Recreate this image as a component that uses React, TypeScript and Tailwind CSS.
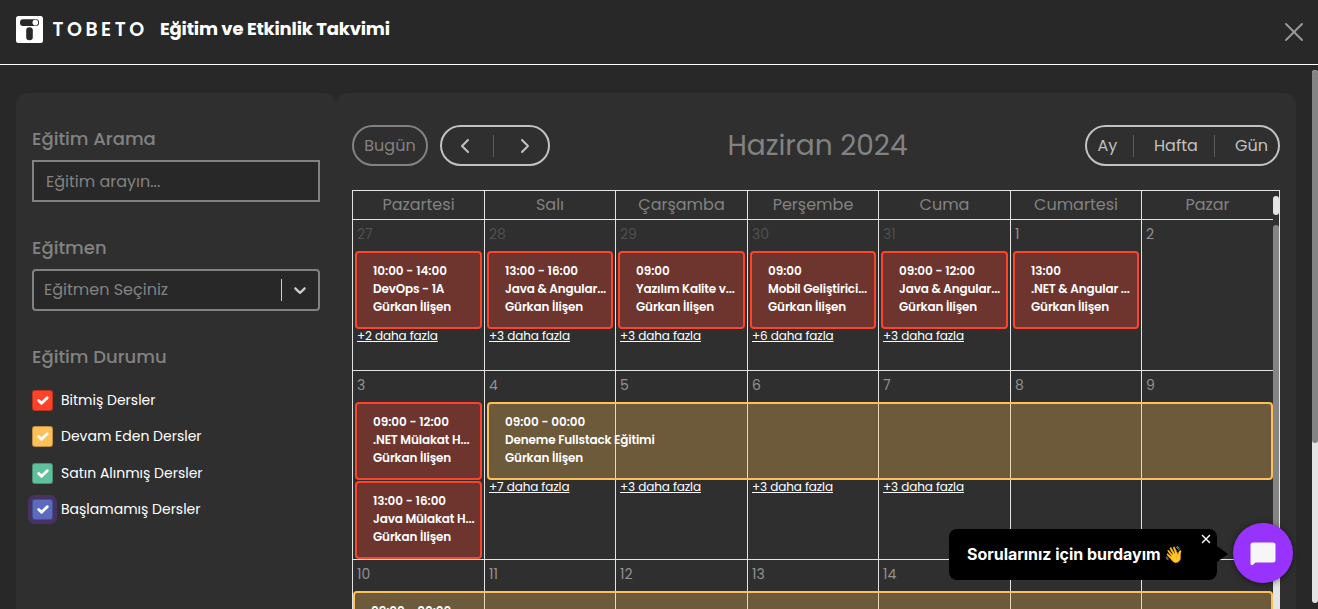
import React from "react";
import { ChevronLeft, ChevronRight, X } from "lucide-react";

type Item = { time: string; title: string; teacher?: string };
type Day = { n: string; muted?: boolean; items?: Item[]; more?: string };

const COLS = "grid-cols-[132px_131px_132px_131px_132px_131px_132px]";
const T = "Gürkan İlişen";

const week1: Day[] = [
  { n: "27", muted: true, items: [{ time: "10:00 - 14:00", title: "DevOps - 1A" }], more: "+2 daha fazla" },
  { n: "28", muted: true, items: [{ time: "13:00 - 16:00", title: "Java & Angular..." }], more: "+3 daha fazla" },
  { n: "29", muted: true, items: [{ time: "09:00", title: "Yazılım Kalite v..." }], more: "+3 daha fazla" },
  { n: "30", muted: true, items: [{ time: "09:00", title: "Mobil Geliştirici..." }], more: "+6 daha fazla" },
  { n: "31", muted: true, items: [{ time: "09:00 - 12:00", title: "Java & Angular..." }], more: "+3 daha fazla" },
  { n: "1", items: [{ time: "13:00", title: ".NET & Angular ..." }] },
  { n: "2" },
];

const week2: Day[] = [
  {
    n: "3",
    items: [
      { time: "09:00 - 12:00", title: ".NET Mülakat H..." },
      { time: "13:00 - 16:00", title: "Java Mülakat H..." },
    ],
  },
  { n: "4", more: "+7 daha fazla" },
  { n: "5", more: "+3 daha fazla" },
  { n: "6", more: "+3 daha fazla" },
  { n: "7", more: "+3 daha fazla" },
  { n: "8" },
  { n: "9" },
];

const week3: Day[] = ["10", "11", "12", "13", "14", "15", "16"].map((n) => ({ n }));

function EventText({ time, title }: Item) {
  return (
    <>
      <div className="tracking-[-0.04px]">{time}</div>
      <div className="tracking-[-0.15px]">{title}</div>
      <div className="tracking-[-0.13px]">{T}</div>
    </>
  );
}

const EVENT = "h-[78px] rounded-[4px] border-2 pl-4 pt-[9px] text-[12px] leading-[18px] font-semibold whitespace-nowrap text-white";

function DayCell({ day, spanned }: { day: Day; spanned?: boolean }) {
  return (
    <div className="border-l border-[#e4e4e4]">
      <div className={`h-[31px] pl-1 pt-[4px] text-[14px] leading-[21px] ${day.muted ? "text-[#4f4f4f]" : "text-[#929292]"}`}>{day.n}</div>
      <div className="flex flex-col gap-px px-0.5">
        {day.items?.map((it) => (
          <div key={it.time} className={`${EVENT} border-[#ff432b] bg-[#6e352f]`}>
            <EventText {...it} />
          </div>
        ))}
      </div>
      {day.more && (
        <div className={`pl-1 text-[12px] leading-[13px] tracking-[-0.1px] text-white underline ${spanned ? "pt-[78px]" : ""}`}>{day.more}</div>
      )}
    </div>
  );
}

function Check({ box, label, gap, focused }: { box: string; label: string; gap: string; focused?: boolean }) {
  return (
    <div className={`flex items-center gap-2 ${gap}`}>
      <span className={`flex size-[21px] items-center justify-center rounded-[3px] border border-black/25 ${box} ${focused ? "shadow-[0_0_0_4px_#483264]" : ""}`}>
        <svg className="shrink-0" width="19" height="19" viewBox="0 0 20 20" fill="none" stroke="#fff" strokeWidth="3" strokeLinecap="round" strokeLinejoin="round">
          <path d="m6 10 3 3 6-6" />
        </svg>
      </span>
      <span className="text-[14px] leading-[21px] text-white">{label}</span>
    </div>
  );
}

export default function App() {
  return (
    <div className="relative flex h-[609px] w-[1318px] flex-col overflow-hidden bg-[#282828] font-[Poppins,Inter,'Noto_Sans',sans-serif]">
      <header className="flex h-[65px] shrink-0 items-start border-b border-white pl-4">
        <svg className="mt-4" width="27" height="27" viewBox="0 0 27 27">
          <rect width="27" height="27" rx="2.5" fill="#fff" />
          <rect x="4" y="3.3" width="19" height="6.7" rx="3" fill="#282828" />
          <circle cx="19.3" cy="6.6" r="2.8" fill="#fff" />
          <rect x="10.2" y="11.3" width="6.6" height="13" rx="3.2" fill="#282828" />
        </svg>
        <span className="ml-[9.5px] mt-[17px] w-[107.5px] text-[19px] leading-[26px] font-semibold tracking-[3.5px] text-white">TOBETO</span>
        <h1 className="mt-[15px] text-[18px] leading-[27px] font-bold tracking-[-0.2px] text-white">Eğitim ve Etkinlik Takvimi</h1>
        <X className="ml-auto mr-[8px] mt-[16px] text-[#9b9b9b]" size={32} strokeWidth={1.4} />
      </header>

      <div className="flex flex-1 pl-4 pt-7">
        <aside className="w-[320px] rounded-xl bg-[#2f2f2f] px-4 text-[#828282]">
          <h2 className="mt-[32px] text-[18px] leading-[27px] font-medium">Eğitim Arama</h2>
          <div className="mt-2 flex h-[42px] items-center border-2 border-[#828282] bg-[#282828] pl-3 pt-[2px] text-[16px]">Eğitim arayın...</div>
          <h2 className="mt-[32px] text-[18px] leading-[27px] font-medium">Eğitmen</h2>
          <div className="mt-2 flex h-[42px] items-center rounded-[4px] border-2 border-[#828282] bg-[#282828] pl-[10px] text-[16px]">
            <span className="mr-auto">Eğitmen Seçiniz</span>
            <span className="h-[22px] w-px bg-[#ccc]" />
            <svg className="mx-[8px]" width="20" height="20" viewBox="0 0 20 20" fill="#ccc">
              <path d="M4.516 7.548c0.436-0.446 1.043-0.481 1.576 0l3.908 3.747 3.908-3.747c0.533-0.481 1.141-0.446 1.574 0 0.436 0.445 0.408 1.197 0 1.615-0.406 0.418-4.695 4.502-4.695 4.502-0.217 0.223-0.502 0.335-0.787 0.335s-0.57-0.112-0.789-0.335c0 0-4.287-4.084-4.695-4.502s-0.436-1.17 0-1.615z" />
            </svg>
          </div>
          <h2 className="mt-[32px] text-[18px] leading-[27px] font-medium">Eğitim Durumu</h2>
          <Check gap="mt-[20px]" box="bg-[#ff432b]" label="Bitmiş Dersler" />
          <Check gap="mt-[15px]" box="bg-[#fdbf57]" label="Devam Eden Dersler" />
          <Check gap="mt-[16px]" box="bg-[#5fc09e]" label="Satın Alınmış Dersler" />
          <Check gap="mt-[15px]" box="bg-[#5c6bc0]" label="Başlamamış Dersler" focused />
        </aside>

        <main className="flex w-[960px] flex-col rounded-xl bg-[#2f2f2f] px-4 pt-8">
          <div className="flex h-[41px] shrink-0 items-center text-[16px]">
            <div className="flex h-[41px] w-[76px] items-center justify-center rounded-full border-2 border-[#828282] text-[#828282]">Bugün</div>
            <div className="ml-3 flex h-[41px] w-[110px] items-center rounded-full border-2 border-[#c2c2c2] text-[#c2c2c2]">
              <span className="flex w-[51px] justify-center pr-[5px]"><ChevronLeft size={24} /></span>
              <span className="h-[22px] w-px bg-[#5b5b5b]" />
              <span className="flex flex-1 justify-center pl-[8px]"><ChevronRight size={24} /></span>
            </div>
            <div className="flex w-[535px] justify-center text-[28px] leading-[41px] text-[#828282]">
              <span className="whitespace-nowrap">Haziran 2024</span>
            </div>
            <div className="flex h-[41px] w-[195px] items-center rounded-full border-2 border-[#c2c2c2] text-[#c2c2c2]">
              <span className="w-[46px] pl-[10.5px]">Ay</span>
              <span className="h-[22px] w-px bg-[#5b5b5b]" />
              <span className="w-[80px] pl-[20px]">Hafta</span>
              <span className="h-[22px] w-px bg-[#5b5b5b]" />
              <span className="pl-[20px]">Gün</span>
            </div>
          </div>

          <div className="mt-6 flex flex-1 border-t border-r border-[#e4e4e4]">
            <div className="flex w-[921px] shrink-0 flex-col">
              <div className={`grid h-[28px] shrink-0 ${COLS} text-center text-[16px] leading-[28px] text-[#828282]`}>
                {["Pazartesi", "Salı", "Çarşamba", "Perşembe", "Cuma", "Cumartesi", "Pazar"].map((d) => (
                  <div key={d} className="border-l border-[#e4e4e4]">{d}</div>
                ))}
              </div>
              <div className={`grid h-[151px] shrink-0 border-t border-[#e4e4e4] ${COLS}`}>
                {week1.map((d) => <DayCell key={d.n} day={d} />)}
              </div>
              <div className={`relative grid h-[189px] shrink-0 border-t border-[#e4e4e4] ${COLS}`}>
                {week2.map((d) => <DayCell key={d.n} day={d} spanned />)}
                <div className={`${EVENT} absolute top-[31px] right-0 left-[135px] border-[#fdbf57] bg-[#fdbf57]/30`}>
                  <EventText time="09:00 - 00:00" title="Deneme Fullstack Eğitimi" />
                </div>
              </div>
              <div className={`relative grid h-[189px] shrink-0 border-t border-[#e4e4e4] ${COLS}`}>
                {week3.map((d) => <DayCell key={d.n} day={d} />)}
                <div className={`${EVENT} absolute top-[31px] right-0 left-px border-[#fdbf57] bg-[#fdbf57]/30`}>
                  <EventText time="09:00 - 00:00" title="Deneme Fullstack Eğitimi" />
                </div>
              </div>
            </div>
            <div className="flex w-[6px] flex-col">
              <div className="mt-[5px] h-[19px] shrink-0 rounded-full bg-[#e4e4e4]" />
              <div className="mt-[10px] h-[327px] shrink-0 rounded-t-full bg-[#848484]" />
              <div className="flex-1 bg-[#e4e4e4]" />
            </div>
          </div>
        </main>
      </div>

      <div className="absolute top-[70px] right-0 h-[533px] w-[6px] overflow-hidden rounded-full bg-[#e4e4e4]">
        <div className="h-[373px] rounded-full bg-[#848484]" />
      </div>

      <div className="absolute top-[529px] left-[949px] flex h-[51px] w-[268px] items-center rounded-lg bg-black pb-[2px] pl-[18px] font-[Inter,sans-serif] text-[16px] font-bold tracking-[-0.03px] text-white">
        <span className="whitespace-nowrap">Sorularınız için burdayım 👋</span>
        <X className="absolute top-[3px] right-[4px]" size={14} strokeWidth={2.4} />
        <span className="absolute top-[17px] -right-[11px] border-y-[8px] border-l-[11px] border-y-transparent border-l-black" />
      </div>
      <div className="absolute top-[523px] left-[1233px] flex size-[60px] items-center justify-center rounded-full bg-[#9733fd] pt-[2px] shadow-[0_1px_6px_rgba(0,0,0,0.5)]">
        <svg width="26" height="24" viewBox="0 0 26 24" fill="#f6f6f6">
          <path d="M3 0.5h20a2.5 2.5 0 0 1 2.5 2.5v15a2.5 2.5 0 0 1-2.5 2.5H5.5L2.5 23.3Q.5 23.5.5 21.5v-18.5a2.5 2.5 0 0 1 2.5-2.5z" />
        </svg>
      </div>
    </div>
  );
}
